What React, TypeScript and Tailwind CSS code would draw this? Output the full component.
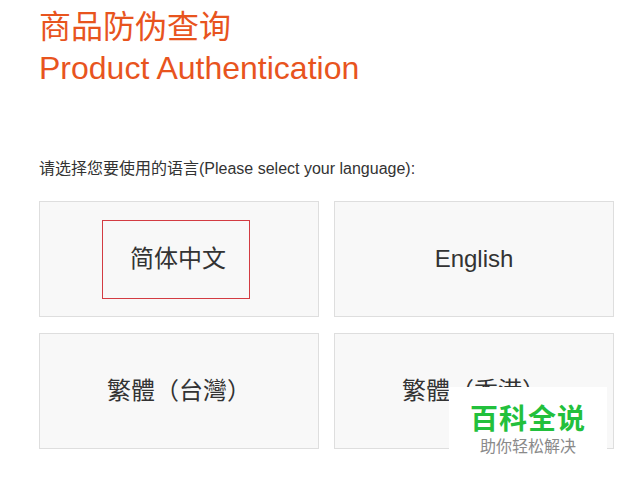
const font = { fontFamily: '"Liberation Sans", "Noto Sans CJK SC", sans-serif' }

function LangCard({ label, active }: { label: string; active?: boolean }) {
  return (
    <div className="h-[116px] bg-[#f8f8f8] border border-[#dedede] flex items-center justify-center">
      {active ? (
        <div className="w-[148px] h-[79px] mr-[7px] pl-[5px] border border-[#d33b42] flex items-center justify-center text-[24px] text-[#333]">
          {label}
        </div>
      ) : (
        <span className="text-[24px] text-[#333]">{label}</span>
      )}
    </div>
  )
}

export default function App() {
  return (
    <div style={font} className="relative w-[632px] h-[489px] bg-white overflow-hidden">
      <div className="pl-[39px] pt-[7px] pr-[18px]">
        <h1 className="text-[32px] leading-[40px] text-[#e8541e] font-normal">商品防伪查询</h1>
        <h2 className="text-[32px] leading-[42px] text-[#e8541e] font-normal">Product Authentication</h2>

        <p className="mt-[70px] text-[16px] leading-[20px] text-[#333]">请选择您要使用的语言(Please select your language):</p>

        <div className="mt-[22px] grid grid-cols-[280px_280px] gap-x-[15px] gap-y-[16px]">
          <LangCard label="简体中文" active />
          <LangCard label="English" />
          <LangCard label="繁體（台灣）" />
          <LangCard label="繁體（香港）" />
        </div>
      </div>

      {/* watermark */}
      <div className="absolute left-[449px] top-[387px] w-[158px] h-[78px] bg-white flex flex-col items-center pt-[17px]">
        <div className="text-[28px] leading-[32px] font-bold text-[#22c03c] tracking-[1px]">百科全说</div>
        <div className="text-[16px] leading-[20px] text-[#8a8a8a] mt-[1px]">助你轻松解决</div>
      </div>
    </div>
  )
}
